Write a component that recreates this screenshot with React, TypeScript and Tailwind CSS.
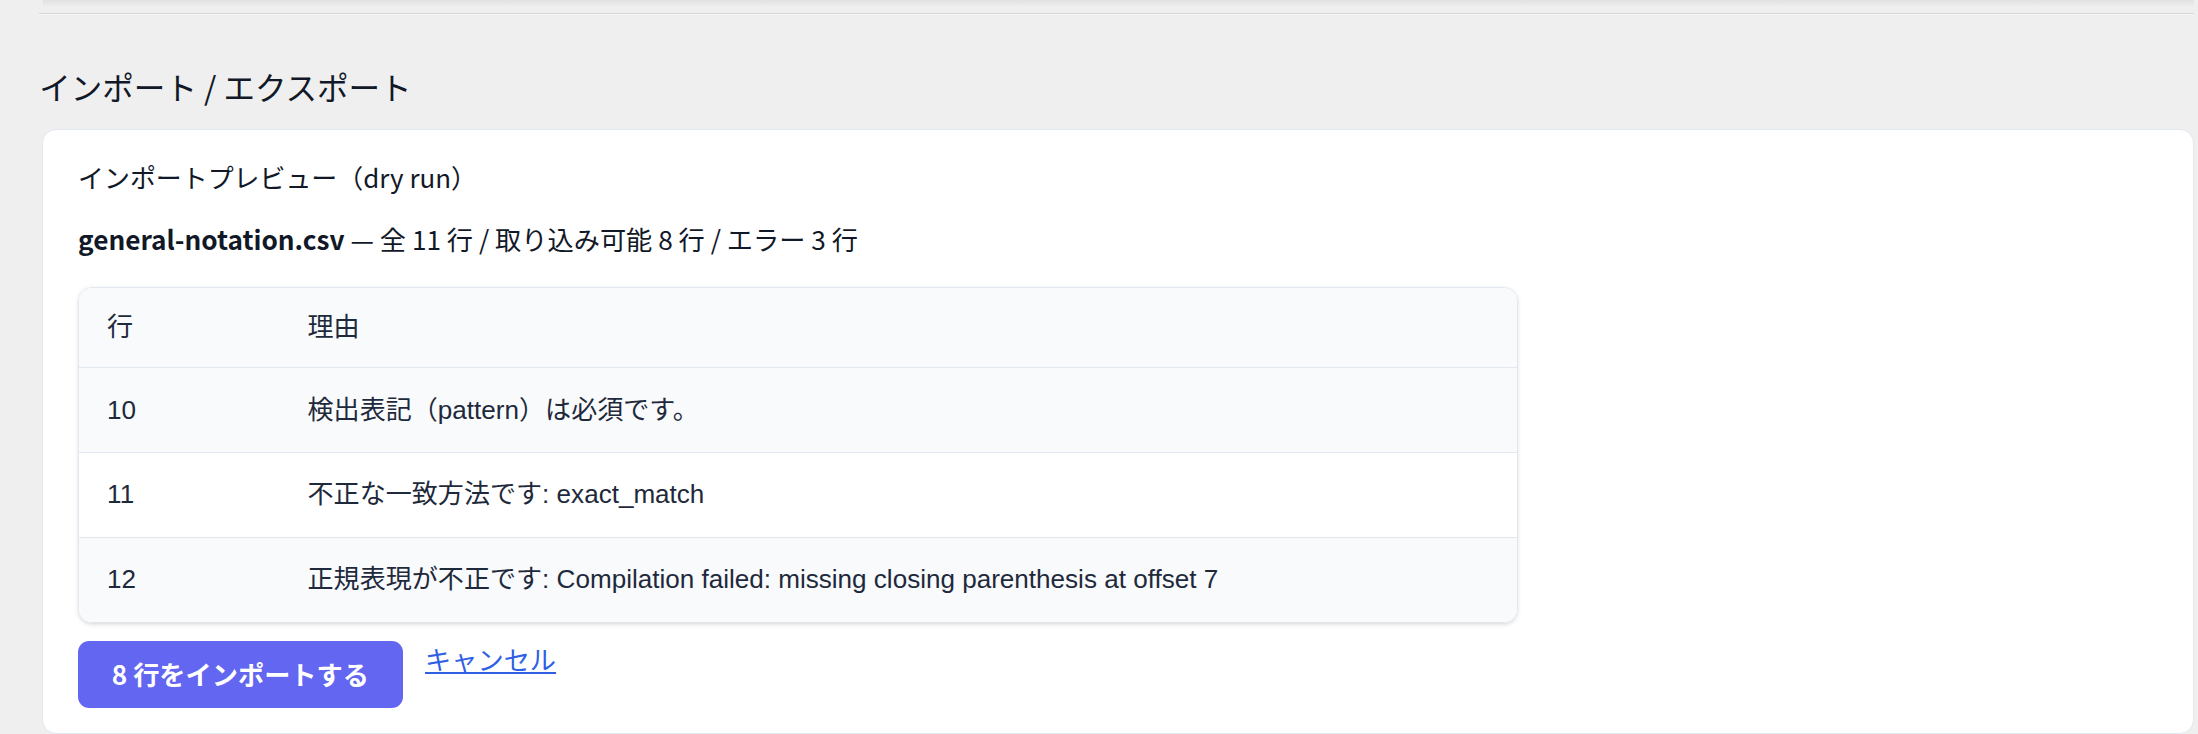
import React from 'react';

const errors = [
  { row: 10, reason: '検出表記（pattern）は必須です。' },
  { row: 11, reason: '不正な一致方法です: exact_match' },
  { row: 12, reason: '正規表現が不正です: Compilation failed: missing closing parenthesis at offset 7' },
];

const App: React.FC = () => {
  return (
    <div className="h-screen overflow-hidden bg-[#efefef]">
      <div className="[zoom:1.4018] pl-7 pr-[3px] font-['Noto_Sans_CJK_JP',sans-serif] text-[#111827]">
        {/* bottom shadow of the panel above */}
        <div className="ml-[3px] h-[5px] bg-gradient-to-b from-[#e1e1e1] to-[#efefef]" />
        <div className="mt-1 h-px bg-[#d6d6d6]" />
        <div className="h-px bg-[#f6f6f6]" />

        <h2 className="mt-[35px] text-[22.5px] leading-8">インポート / エクスポート</h2>

        <section className="mt-[14px] ml-[2px] rounded-[10px] border border-slate-200 bg-white px-[25px] pt-5 pb-[18px]">
          <h3 className="text-[18.5px] leading-[27px]">インポートプレビュー（dry run）</h3>
          <p className="mt-[18px] text-[18.7px] leading-[27px]">
            <strong className="font-bold">general-notation.csv</strong> — 全 11 行 / 取り込み可能 8 行 / エラー 3 行
          </p>

          <div className="mt-5 w-[1027px] overflow-hidden rounded-[10px] border border-slate-200 shadow-sm">
            <table className="w-full border-collapse font-['Liberation_Sans','Noto_Sans_CJK_JP',sans-serif] text-[18.6px] text-[#1e293b]">
              <thead>
                <tr className="h-[57px] bg-slate-50">
                  <th className="w-[143px] pl-5 text-left font-normal">行</th>
                  <th className="pl-5 text-left font-normal">理由</th>
                </tr>
              </thead>
              <tbody>
                {errors.map((e, i) => (
                  <tr key={e.row} className={`h-[60.4px] border-t border-slate-200 ${i % 2 === 0 ? 'bg-slate-50' : 'bg-white'}`}>
                    <td className="pl-5">{e.row}</td>
                    <td className="pl-5">{e.reason}</td>
                  </tr>
                ))}
              </tbody>
            </table>
          </div>

          <div className="mt-[13px] flex items-start gap-4">
            <button className="h-12 rounded-lg bg-[#6366f1] px-6 text-[18.7px] font-bold text-white">
              8 行をインポートする
            </button>
            <a href="#" className="text-[18.7px] leading-[27px] text-[#2f5fe3] underline">
              キャンセル
            </a>
          </div>
        </section>
      </div>
    </div>
  );
};

export default App;
